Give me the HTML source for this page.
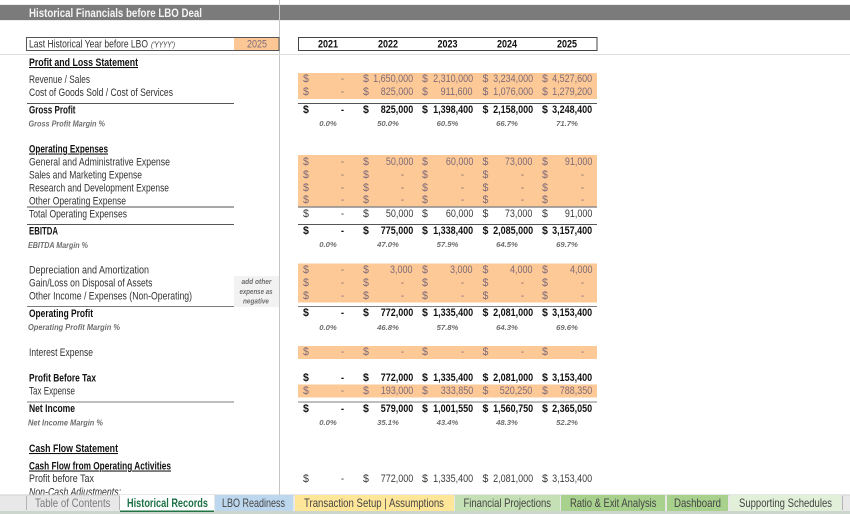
<!DOCTYPE html>
<html><head><meta charset="utf-8"><style>
html,body{margin:0;padding:0;background:#fff}
#p{position:relative;width:850px;height:514px;overflow:hidden;font-family:"Liberation Sans",sans-serif;filter:blur(.3px)}
svg{position:absolute;left:0;top:0}
text{font-family:"Liberation Sans",sans-serif;font-size:10.6px;fill:#333}
.b{font-weight:bold;fill:#111}
.u{text-decoration:underline}
.m{font-style:italic;font-weight:bold;font-size:8.6px;fill:#6e6e6e}
.r{position:absolute;left:0;width:850px;height:13px;line-height:13px;font-size:10.6px;color:#3c3c3c}
.r a{position:absolute;top:0;white-space:nowrap}
.i{color:#7f6b78}
.B{font-weight:bold;color:#111}
.d1{left:303px}.d2{left:363px}.d3{left:422px}.d4{left:482.5px}.d5{left:542px}
.n1,.n2,.n3,.n4,.n5{transform:scaleX(.85);transform-origin:right center}
.n1{right:497px}.n2{right:437px}.n3{right:377px}.n4{right:317.3px}.n5{right:257.5px}
.z{padding-right:10px}
.P{font:italic bold 7.7px/13px "Liberation Sans",sans-serif;color:#6e6e6e}
.P a{width:40px;text-align:center}
.p1{left:308px}.p2{left:368px}.p3{left:427.5px}.p4{left:487px}.p5{left:547px}
</style></head><body><div id="p">
<svg width="850" height="514" xmlns="http://www.w3.org/2000/svg">
<rect x="0" y="5" width="850" height="15" fill="#7b7b7b"/>
<rect x="0" y="4" width="850" height="1" fill="#ececec"/>
<rect x="0" y="20" width="850" height="1" fill="#ececec"/>
<rect x="279" y="0" width="1" height="497" fill="#c6c6c6"/>
<rect x="0" y="54" width="850" height="1" fill="#dedede"/>
<text x="29" y="17" class="b" style="fill:#f4f4f4;font-size:11.6px" textLength="173" lengthAdjust="spacingAndGlyphs">Historical Financials before LBO Deal</text>

<rect x="234" y="37.5" width="45" height="13" fill="#fcc795"/>
<rect x="26.5" y="37.5" width="252.5" height="13" fill="none" stroke="#555" stroke-width="1"/>
<rect x="298.5" y="37.5" width="298.5" height="13" fill="none" stroke="#444" stroke-width="1"/>
<text x="29" y="47.5" textLength="119" lengthAdjust="spacingAndGlyphs">Last Historical Year before LBO</text>
<text x="151" y="47.5" style="font-style:italic;font-size:8.4px" textLength="24" lengthAdjust="spacingAndGlyphs">('YYYY')</text>
<text x="247" y="47.5" style="fill:#7f6b78" textLength="20" lengthAdjust="spacingAndGlyphs">2025</text>
<text x="328" y="47.5" class="b" text-anchor="middle" textLength="20" lengthAdjust="spacingAndGlyphs">2021</text>
<text x="388" y="47.5" class="b" text-anchor="middle" textLength="20" lengthAdjust="spacingAndGlyphs">2022</text>
<text x="447.5" y="47.5" class="b" text-anchor="middle" textLength="20" lengthAdjust="spacingAndGlyphs">2023</text>
<text x="507" y="47.5" class="b" text-anchor="middle" textLength="20" lengthAdjust="spacingAndGlyphs">2024</text>
<text x="567" y="47.5" class="b" text-anchor="middle" textLength="20" lengthAdjust="spacingAndGlyphs">2025</text>

<g fill="#fdc997">
<rect x="298" y="73" width="299" height="26"/>
<rect x="298" y="155" width="299" height="52"/>
<rect x="298" y="263.5" width="299" height="39"/>
<rect x="298" y="346" width="299" height="13"/>
<rect x="298" y="384.5" width="299" height="13"/>
</g>
<rect x="234" y="276" width="45" height="31" fill="#f2f2f2"/>

<g stroke="#555" stroke-width="1">
<path d="M27 103.5H234M298 103.5H597"/>
<path d="M27 207H234M298 207H597" stroke="#8c8c8c" stroke-width="1.4"/>
<path d="M27 224.5H234M298 224.5H597"/>
<path d="M27 306.5H234M298 306.5H597" stroke="#7c7c7c"/>
<path d="M27 402H234M298 402H597" stroke="#7c7c7c"/>
</g>

<text x="29" y="66" class="b u" textLength="109" lengthAdjust="spacingAndGlyphs">Profit and Loss Statement</text>
<text x="29" y="83" textLength="61" lengthAdjust="spacingAndGlyphs">Revenue / Sales</text>
<text x="29" y="96" textLength="144" lengthAdjust="spacingAndGlyphs">Cost of Goods Sold / Cost of Services</text>
<text x="29" y="113.5" class="b" textLength="46.5" lengthAdjust="spacingAndGlyphs">Gross Profit</text>
<text x="28.5" y="126.5" class="m" textLength="76.5" lengthAdjust="spacingAndGlyphs">Gross Profit Margin %</text>
<text x="29" y="152.5" class="b u" textLength="79" lengthAdjust="spacingAndGlyphs">Operating Expenses</text>
<text x="29" y="165.5" textLength="141" lengthAdjust="spacingAndGlyphs">General and Administrative Expense</text>
<text x="29" y="178.5" textLength="113" lengthAdjust="spacingAndGlyphs">Sales and Marketing Expense</text>
<text x="29" y="191.5" textLength="140" lengthAdjust="spacingAndGlyphs">Research and Development Expense</text>
<text x="29" y="204.5" textLength="97" lengthAdjust="spacingAndGlyphs">Other Operating Expense</text>
<text x="29" y="217.5" textLength="98" lengthAdjust="spacingAndGlyphs">Total Operating Expenses</text>
<text x="29" y="234.5" class="b" textLength="29" lengthAdjust="spacingAndGlyphs">EBITDA</text>
<text x="28" y="248" class="m" textLength="60" lengthAdjust="spacingAndGlyphs">EBITDA Margin %</text>
<text x="29" y="273.5" textLength="120" lengthAdjust="spacingAndGlyphs">Depreciation and Amortization</text>
<text x="29" y="286.5" textLength="123.5" lengthAdjust="spacingAndGlyphs">Gain/Loss on Disposal of Assets</text>
<text x="29" y="299.5" textLength="163" lengthAdjust="spacingAndGlyphs">Other Income / Expenses (Non-Operating)</text>
<text x="29" y="317" class="b" textLength="64" lengthAdjust="spacingAndGlyphs">Operating Profit</text>
<text x="28" y="330" class="m" textLength="92" lengthAdjust="spacingAndGlyphs">Operating Profit Margin %</text>
<text x="29" y="356" textLength="64" lengthAdjust="spacingAndGlyphs">Interest Expense</text>
<text x="29" y="381.5" class="b" textLength="67" lengthAdjust="spacingAndGlyphs">Profit Before Tax</text>
<text x="29" y="394.5" textLength="46" lengthAdjust="spacingAndGlyphs">Tax Expense</text>
<text x="29" y="412" class="b" textLength="46" lengthAdjust="spacingAndGlyphs">Net Income</text>
<text x="28" y="425.5" class="m" textLength="75" lengthAdjust="spacingAndGlyphs">Net Income Margin %</text>
<text x="29" y="452" class="b u" textLength="89" lengthAdjust="spacingAndGlyphs">Cash Flow Statement</text>
<text x="29" y="469.5" class="b u" textLength="142" lengthAdjust="spacingAndGlyphs">Cash Flow from Operating Activities</text>
<text x="29" y="482" textLength="65" lengthAdjust="spacingAndGlyphs">Profit before Tax</text>
<text x="29" y="495.5" style="font-style:italic" textLength="92" lengthAdjust="spacingAndGlyphs">Non-Cash Adjustments:</text>

<text x="256.5" y="284" class="m" text-anchor="middle" style="font-size:7.4px" textLength="30" lengthAdjust="spacingAndGlyphs">add other</text>
<text x="256" y="294" class="m" text-anchor="middle" style="font-size:7.4px" textLength="33" lengthAdjust="spacingAndGlyphs">expense as</text>
<text x="256" y="303.5" class="m" text-anchor="middle" style="font-size:7.4px" textLength="26" lengthAdjust="spacingAndGlyphs">negative</text>

<!-- tab strip -->
<rect x="0" y="495" width="850" height="19" fill="#e8e8e8"/>
<rect x="0" y="494.5" width="850" height="1" fill="#cfcfcf"/>
<rect x="0" y="511" width="850" height="3" fill="#ccd6cc"/>
<rect x="26" y="496" width="1" height="14" fill="#b4b4b4"/>
<rect x="119" y="496" width="1" height="14" fill="#b4b4b4"/>
<rect x="120" y="495" width="94" height="16" fill="#fff"/>
<rect x="120" y="510.5" width="94" height="1.5" fill="#217346"/>
<rect x="215" y="495" width="78" height="16" fill="#bdd7ee"/>
<rect x="295" y="495" width="159" height="16" fill="#ffe699"/>
<rect x="455" y="495" width="105" height="16" fill="#c5e0b4"/>
<rect x="561" y="495" width="104" height="16" fill="#a9d18e"/>
<rect x="667" y="495" width="61" height="16" fill="#a9d18e"/>
<rect x="730" y="495" width="111" height="16" fill="#e2f0d9"/>
<rect x="842" y="496" width="1" height="14" fill="#b4b4b4"/>
<text x="35" y="507" style="font-size:11.6px;fill:#7c7c7c" textLength="75.5" lengthAdjust="spacingAndGlyphs">Table of Contents</text>
<text x="127" y="507" class="b" style="font-size:11.6px;fill:#1e7145" textLength="81" lengthAdjust="spacingAndGlyphs">Historical Records</text>
<text x="222" y="507" style="font-size:11.6px;fill:#444" textLength="63" lengthAdjust="spacingAndGlyphs">LBO Readiness</text>
<text x="304" y="507" style="font-size:11.6px;fill:#444" textLength="140" lengthAdjust="spacingAndGlyphs">Transaction Setup | Assumptions</text>
<text x="463.5" y="507" style="font-size:11.6px;fill:#444" textLength="87.5" lengthAdjust="spacingAndGlyphs">Financial Projections</text>
<text x="570" y="507" style="font-size:11.6px;fill:#444" textLength="86.5" lengthAdjust="spacingAndGlyphs">Ratio &amp; Exit Analysis</text>
<text x="674" y="507" style="font-size:11.6px;fill:#444" textLength="47" lengthAdjust="spacingAndGlyphs">Dashboard</text>
<text x="739" y="507" style="font-size:11.6px;fill:#444" textLength="93" lengthAdjust="spacingAndGlyphs">Supporting Schedules</text>
</svg>

<div class="r i" style="top:73px"><a class="d1">$</a><a class="n1 z">-</a><a class="d2">$</a><a class="n2">1,650,000</a><a class="d3">$</a><a class="n3">2,310,000</a><a class="d4">$</a><a class="n4">3,234,000</a><a class="d5">$</a><a class="n5">4,527,600</a></div>
<div class="r i" style="top:86px"><a class="d1">$</a><a class="n1 z">-</a><a class="d2">$</a><a class="n2">825,000</a><a class="d3">$</a><a class="n3">911,600</a><a class="d4">$</a><a class="n4">1,076,000</a><a class="d5">$</a><a class="n5">1,279,200</a></div>
<div class="r B" style="top:103.5px"><a class="d1">$</a><a class="n1 z">-</a><a class="d2">$</a><a class="n2">825,000</a><a class="d3">$</a><a class="n3">1,398,400</a><a class="d4">$</a><a class="n4">2,158,000</a><a class="d5">$</a><a class="n5">3,248,400</a></div>
<div class="r P" style="top:117px"><a class="p1">0.0%</a><a class="p2">50.0%</a><a class="p3">60.5%</a><a class="p4">66.7%</a><a class="p5">71.7%</a></div>

<div class="r i" style="top:155.5px"><a class="d1">$</a><a class="n1 z">-</a><a class="d2">$</a><a class="n2">50,000</a><a class="d3">$</a><a class="n3">60,000</a><a class="d4">$</a><a class="n4">73,000</a><a class="d5">$</a><a class="n5">91,000</a></div>
<div class="r i" style="top:168.5px"><a class="d1">$</a><a class="n1 z">-</a><a class="d2">$</a><a class="n2 z">-</a><a class="d3">$</a><a class="n3 z">-</a><a class="d4">$</a><a class="n4 z">-</a><a class="d5">$</a><a class="n5 z">-</a></div>
<div class="r i" style="top:181.5px"><a class="d1">$</a><a class="n1 z">-</a><a class="d2">$</a><a class="n2 z">-</a><a class="d3">$</a><a class="n3 z">-</a><a class="d4">$</a><a class="n4 z">-</a><a class="d5">$</a><a class="n5 z">-</a></div>
<div class="r i" style="top:194px"><a class="d1">$</a><a class="n1 z">-</a><a class="d2">$</a><a class="n2 z">-</a><a class="d3">$</a><a class="n3 z">-</a><a class="d4">$</a><a class="n4 z">-</a><a class="d5">$</a><a class="n5 z">-</a></div>
<div class="r" style="top:207.5px"><a class="d1">$</a><a class="n1 z">-</a><a class="d2">$</a><a class="n2">50,000</a><a class="d3">$</a><a class="n3">60,000</a><a class="d4">$</a><a class="n4">73,000</a><a class="d5">$</a><a class="n5">91,000</a></div>
<div class="r B" style="top:224.8px"><a class="d1">$</a><a class="n1 z">-</a><a class="d2">$</a><a class="n2">775,000</a><a class="d3">$</a><a class="n3">1,338,400</a><a class="d4">$</a><a class="n4">2,085,000</a><a class="d5">$</a><a class="n5">3,157,400</a></div>
<div class="r P" style="top:238px"><a class="p1">0.0%</a><a class="p2">47.0%</a><a class="p3">57.9%</a><a class="p4">64.5%</a><a class="p5">69.7%</a></div>

<div class="r i" style="top:264px"><a class="d1">$</a><a class="n1 z">-</a><a class="d2">$</a><a class="n2">3,000</a><a class="d3">$</a><a class="n3">3,000</a><a class="d4">$</a><a class="n4">4,000</a><a class="d5">$</a><a class="n5">4,000</a></div>
<div class="r i" style="top:277px"><a class="d1">$</a><a class="n1 z">-</a><a class="d2">$</a><a class="n2 z">-</a><a class="d3">$</a><a class="n3 z">-</a><a class="d4">$</a><a class="n4 z">-</a><a class="d5">$</a><a class="n5 z">-</a></div>
<div class="r i" style="top:290px"><a class="d1">$</a><a class="n1 z">-</a><a class="d2">$</a><a class="n2 z">-</a><a class="d3">$</a><a class="n3 z">-</a><a class="d4">$</a><a class="n4 z">-</a><a class="d5">$</a><a class="n5 z">-</a></div>
<div class="r B" style="top:307px"><a class="d1">$</a><a class="n1 z">-</a><a class="d2">$</a><a class="n2">772,000</a><a class="d3">$</a><a class="n3">1,335,400</a><a class="d4">$</a><a class="n4">2,081,000</a><a class="d5">$</a><a class="n5">3,153,400</a></div>
<div class="r P" style="top:320.5px"><a class="p1">0.0%</a><a class="p2">46.8%</a><a class="p3">57.8%</a><a class="p4">64.3%</a><a class="p5">69.6%</a></div>

<div class="r i" style="top:346px"><a class="d1">$</a><a class="n1 z">-</a><a class="d2">$</a><a class="n2 z">-</a><a class="d3">$</a><a class="n3 z">-</a><a class="d4">$</a><a class="n4 z">-</a><a class="d5">$</a><a class="n5 z">-</a></div>

<div class="r B" style="top:372px"><a class="d1">$</a><a class="n1 z">-</a><a class="d2">$</a><a class="n2">772,000</a><a class="d3">$</a><a class="n3">1,335,400</a><a class="d4">$</a><a class="n4">2,081,000</a><a class="d5">$</a><a class="n5">3,153,400</a></div>
<div class="r i" style="top:385px"><a class="d1">$</a><a class="n1 z">-</a><a class="d2">$</a><a class="n2">193,000</a><a class="d3">$</a><a class="n3">333,850</a><a class="d4">$</a><a class="n4">520,250</a><a class="d5">$</a><a class="n5">788,350</a></div>
<div class="r B" style="top:402.5px"><a class="d1">$</a><a class="n1 z">-</a><a class="d2">$</a><a class="n2">579,000</a><a class="d3">$</a><a class="n3">1,001,550</a><a class="d4">$</a><a class="n4">1,560,750</a><a class="d5">$</a><a class="n5">2,365,050</a></div>
<div class="r P" style="top:416px"><a class="p1">0.0%</a><a class="p2">35.1%</a><a class="p3">43.4%</a><a class="p4">48.3%</a><a class="p5">52.2%</a></div>

<div class="r" style="top:472.5px"><a class="d1">$</a><a class="n1 z">-</a><a class="d2">$</a><a class="n2">772,000</a><a class="d3">$</a><a class="n3">1,335,400</a><a class="d4">$</a><a class="n4">2,081,000</a><a class="d5">$</a><a class="n5">3,153,400</a></div>
</div></body></html>
